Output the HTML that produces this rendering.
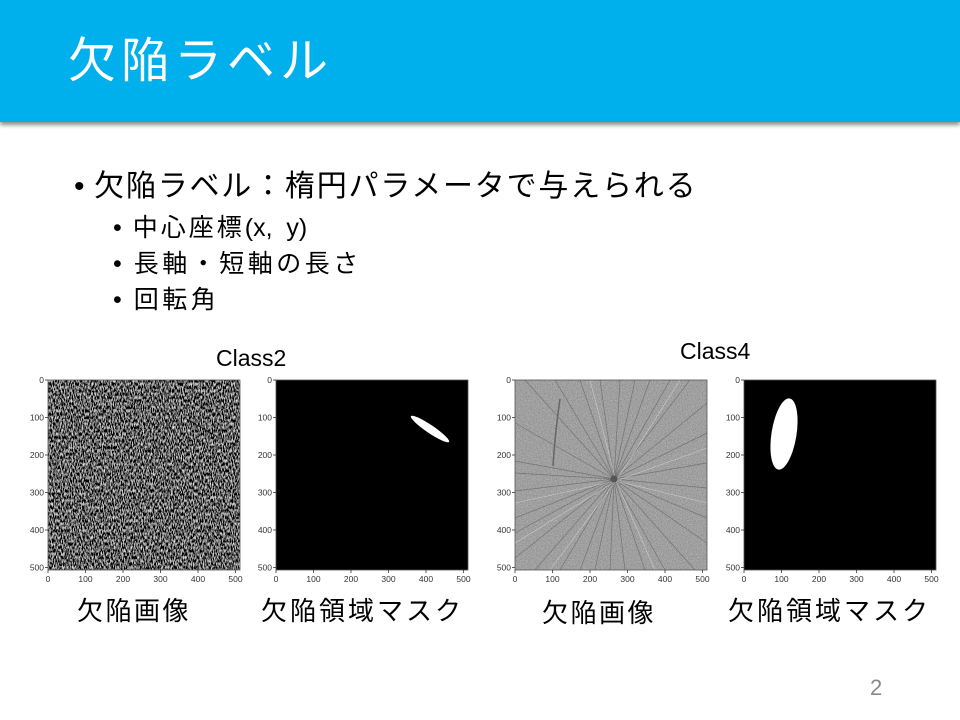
<!DOCTYPE html>
<html><head><meta charset="utf-8"><style>
body{margin:0;width:960px;height:720px;background:#fff;position:relative;overflow:hidden;font-family:"Liberation Sans","Noto Sans CJK JP",sans-serif;}
.hdr{position:absolute;left:0;top:0;width:960px;height:122px;background:#00b0ec;box-shadow:0 3px 4px rgba(0,0,0,0.45);}
.t{position:absolute;white-space:nowrap;color:#000;}
.l{letter-spacing:0}
svg text{font-family:"Liberation Sans",sans-serif;font-size:8.5px;fill:#333;}
</style></head><body>
<div class="hdr"></div>
<div class="t" style="left:68px;top:32px;font-size:48px;letter-spacing:5px;color:#fff;line-height:60px">欠陥ラベル</div>
<div class="t" style="left:74px;top:168px;font-size:30px;line-height:38px;letter-spacing:1.8px">•&thinsp;欠陥ラベル：楕円パラメータで与えられる</div>
<div class="t" style="left:113px;top:212px;font-size:25px;line-height:32px;letter-spacing:3px">•&thinsp;中心座標<span class="l">(x,&nbsp; y)</span></div>
<div class="t" style="left:113px;top:248px;font-size:25px;line-height:32px;letter-spacing:3.5px">•&thinsp;長軸・短軸の長さ</div>
<div class="t" style="left:113px;top:284px;font-size:25px;line-height:32px;letter-spacing:3.5px">•&thinsp;回転角</div>
<div class="t" style="left:216px;top:343px;font-size:23px;line-height:30px">Class2</div>
<div class="t" style="left:680px;top:336px;font-size:23px;line-height:30px">Class4</div>
<div class="t" style="left:77px;top:594px;font-size:26px;line-height:34px;letter-spacing:2.5px">欠陥画像</div>
<div class="t" style="left:261px;top:594px;font-size:26px;line-height:34px;letter-spacing:3px">欠陥領域マスク</div>
<div class="t" style="left:542px;top:596px;font-size:26px;line-height:34px;letter-spacing:2.5px">欠陥画像</div>
<div class="t" style="left:728px;top:594px;font-size:26px;line-height:34px;letter-spacing:3px">欠陥領域マスク</div>
<div class="t" style="left:870px;top:674px;font-size:22px;line-height:28px;color:#888">2</div>

<svg width="0" height="0" style="position:absolute">
<defs>
<filter id="nz2" x="0" y="0" width="100%" height="100%"><feTurbulence type="fractalNoise" baseFrequency="0.9 0.3" numOctaves="2" seed="7"/><feColorMatrix type="matrix" values="2.2 0 0 0 -0.95  2.2 0 0 0 -0.95  2.2 0 0 0 -0.95  0 0 0 0 1"/></filter>
<filter id="nz3" x="0" y="0" width="100%" height="100%" color-interpolation-filters="sRGB"><feTurbulence type="fractalNoise" baseFrequency="0.8" numOctaves="2" seed="4"/><feColorMatrix type="matrix" values="0.25 0 0 0 0.5  0.25 0 0 0 0.5  0.25 0 0 0 0.5  0 0 0 0 1"/></filter>
<g id="ax">
<rect x="20" y="7" width="192" height="190" fill="none" stroke="#555" stroke-width="0.8"/>
<g stroke="#333" stroke-width="0.8">
<line x1="17" y1="7" x2="20" y2="7"/><line x1="17" y1="44.5" x2="20" y2="44.5"/><line x1="17" y1="82" x2="20" y2="82"/><line x1="17" y1="119.5" x2="20" y2="119.5"/><line x1="17" y1="157" x2="20" y2="157"/><line x1="17" y1="194.5" x2="20" y2="194.5"/>
<line x1="20" y1="197" x2="20" y2="200"/><line x1="57.5" y1="197" x2="57.5" y2="200"/><line x1="95" y1="197" x2="95" y2="200"/><line x1="132.5" y1="197" x2="132.5" y2="200"/><line x1="170" y1="197" x2="170" y2="200"/><line x1="207.5" y1="197" x2="207.5" y2="200"/>
</g>
<g text-anchor="end"><text x="16" y="10">0</text><text x="16" y="47.5">100</text><text x="16" y="85">200</text><text x="16" y="122.5">300</text><text x="16" y="160">400</text><text x="16" y="197.5">500</text></g>
<g text-anchor="middle"><text x="20" y="209">0</text><text x="57.5" y="209">100</text><text x="95" y="209">200</text><text x="132.5" y="209">300</text><text x="170" y="209">400</text><text x="207.5" y="209">500</text></g>
</g>
</defs></svg>

<svg style="position:absolute;left:28px;top:373px" width="215" height="215">
<rect x="20" y="7" width="192" height="190" fill="#333"/>
<rect x="20" y="7" width="192" height="190" filter="url(#nz2)"/>
<line x1="160" y1="47" x2="188" y2="63" stroke="#111" stroke-width="1"/>
<use href="#ax"/>
</svg>

<svg style="position:absolute;left:256px;top:373px" width="215" height="215">
<rect x="20" y="7" width="192" height="190" fill="#000"/>
<ellipse cx="174" cy="56" rx="23" ry="4" fill="#fff" transform="rotate(34 174 56)"/>
<use href="#ax"/>
</svg>

<svg style="position:absolute;left:495px;top:373px" width="215" height="215">
<rect x="20" y="7" width="192" height="190" fill="#a0a0a0"/>
<rect x="20" y="7" width="192" height="190" filter="url(#nz3)"/>
<g stroke="#555" stroke-width="0.7" opacity="0.6">
<line x1="119" y1="106" x2="20" y2="50"/><line x1="119" y1="106" x2="20" y2="88"/><line x1="119" y1="106" x2="20" y2="100"/><line x1="119" y1="106" x2="20" y2="118"/><line x1="119" y1="106" x2="20" y2="145"/><line x1="119" y1="106" x2="20" y2="160"/><line x1="119" y1="106" x2="20" y2="185"/>
<line x1="119" y1="106" x2="40" y2="197"/><line x1="119" y1="106" x2="65" y2="197"/><line x1="119" y1="106" x2="85" y2="197"/><line x1="119" y1="106" x2="100" y2="197"/><line x1="119" y1="106" x2="115" y2="197"/><line x1="119" y1="106" x2="130" y2="197"/><line x1="119" y1="106" x2="150" y2="197"/><line x1="119" y1="106" x2="170" y2="197"/><line x1="119" y1="106" x2="200" y2="197"/>
<line x1="119" y1="106" x2="212" y2="170"/><line x1="119" y1="106" x2="212" y2="145"/><line x1="119" y1="106" x2="212" y2="115"/><line x1="119" y1="106" x2="212" y2="90"/><line x1="119" y1="106" x2="212" y2="60"/><line x1="119" y1="106" x2="212" y2="30"/>
<line x1="119" y1="106" x2="195" y2="7"/><line x1="119" y1="106" x2="175" y2="7"/><line x1="119" y1="106" x2="155" y2="7"/><line x1="119" y1="106" x2="140" y2="7"/><line x1="119" y1="106" x2="125" y2="7"/><line x1="119" y1="106" x2="105" y2="7"/><line x1="119" y1="106" x2="85" y2="7"/><line x1="119" y1="106" x2="60" y2="7"/><line x1="119" y1="106" x2="30" y2="7"/>
</g>
<g stroke="#e8e8e8" stroke-width="0.6" opacity="0.6">
<line x1="121" y1="108" x2="20" y2="130"/><line x1="121" y1="108" x2="55" y2="197"/><line x1="121" y1="108" x2="160" y2="197"/><line x1="121" y1="108" x2="212" y2="130"/><line x1="121" y1="108" x2="185" y2="7"/><line x1="121" y1="108" x2="95" y2="7"/><line x1="121" y1="108" x2="20" y2="170"/><line x1="121" y1="108" x2="212" y2="75"/>
</g>
<circle cx="119" cy="106" r="3.5" fill="#555"/>
<path d="M65 26 Q60 60 58 93" stroke="#666" stroke-width="1.5" fill="none"/>
<use href="#ax"/>
</svg>

<svg style="position:absolute;left:724px;top:373px" width="215" height="215">
<rect x="20" y="7" width="192" height="190" fill="#000"/>
<ellipse cx="60" cy="61" rx="12.5" ry="36" fill="#fff" transform="rotate(9 60 61)"/>
<use href="#ax"/>
</svg>
</body></html>
